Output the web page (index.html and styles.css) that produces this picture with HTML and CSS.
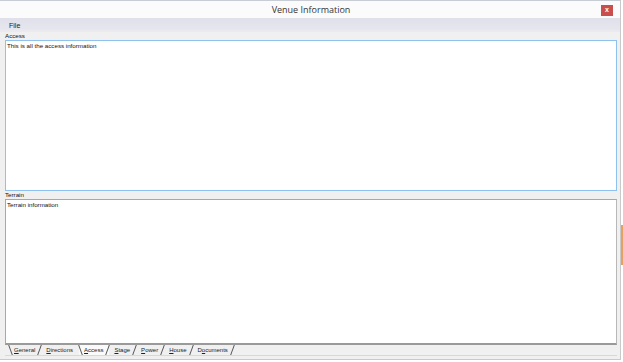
FILE: index.html
```html
<!DOCTYPE html>
<html lang="en">
<head>
    <meta charset="UTF-8">
    <title>Venue Information</title>
    <link rel="stylesheet" href="styles.css">
</head>
<body>
    <div class="window">
        <div class="titlebar">
            <span class="title">Venue Information</span>
            <span class="close">x</span>
        </div>
        <div class="menubar">
            <span class="menu-item">File</span>
        </div>
        <main class="content">
            <div class="label">Access</div>
            <div class="field field-access focused">This is all the access information</div>
            <div class="label">Terrain</div>
            <div class="field field-terrain">Terrain information</div>
            <div class="tabs">
                <span class="tab first"><u>G</u>eneral</span>
                <span class="tab behind"><u>D</u>irections</span>
                <span class="tab active"><u>A</u>ccess</span>
                <span class="tab"><u>S</u>tage</span>
                <span class="tab"><u>P</u>ower</span>
                <span class="tab"><u>H</u>ouse</span>
                <span class="tab">D<u>o</u>cuments</span>
            </div>
        </main>
    </div>
    <div class="desktop">
        <div class="desk-spot"></div>
    </div>
</body>
</html>
```

FILE: styles.css
```css
* {
    box-sizing: border-box;
}

body {
    margin: 0;
    display: flex;
    background-color: #ffffff;
    font-family: "Liberation Sans", Arial, sans-serif;
    color: #111;
}

.window {
    width: 621px;
    height: 360px;
    display: flex;
    flex-direction: column;
    background-color: #f0f0f0;
    border-right: 1px solid #c9c9c9;
    border-bottom: 1px solid #c9c9c9;
}

.titlebar {
    height: 18px;
    flex: none;
    position: relative;
    display: flex;
    justify-content: center;
    align-items: center;
    background-color: #fbfbfb;
    border-top: 1px solid #c7ccd5;
}

.title {
    font-family: "Open Sans", "Noto Sans", sans-serif;
    font-size: 9px;
    color: #333;
    padding-left: 2px;
}

.close {
    position: absolute;
    right: 7px;
    top: 4px;
    width: 12px;
    height: 11px;
    background-color: #c94f4f;
    color: #fff;
    font-size: 7px;
    line-height: 10px;
    text-align: center;
    font-weight: bold;
}

.menubar {
    height: 14px;
    flex: none;
    display: flex;
    align-items: center;
    padding-left: 9px;
    background: linear-gradient(#e0e0eb, #e6e6ee 80%, #ececef);
}

.menu-item {
    font-size: 7px;
    color: #222;
}

.content {
    flex: 1;
    display: flex;
    flex-direction: column;
    padding: 0 3px 0 5px;
}

.label {
    font-size: 6.2px;
    height: 7px;
    line-height: 6px;
    margin-top: 1px;
}

.field {
    background-color: #fff;
    border: 1px solid #a8a8a8;
    font-size: 6.2px;
    line-height: 8px;
    padding: 1px 1px;
}

.field-access {
    height: 151px;
}

.field-terrain {
    height: 146px;
    border-bottom: 2px solid #9a9a9a;
    border-right-color: #b8b8b8;
}

.focused {
    border-color: #8ec1ee;
}

.tabs {
    display: flex;
    height: 11px;
    padding-left: 4px;
    border-bottom: 1px solid #d8d8d8;
}

.tab {
    position: relative;
    font-size: 6px;
    line-height: 10px;
    padding: 0 6px 0 5px;
    color: #222;
}

.tab::after {
    content: "";
    position: absolute;
    right: 1px;
    top: 0;
    height: 10px;
    border-right: 1px solid #555;
    transform: skewX(-20deg);
}

.tab.behind::after {
    display: none;
}

.tab.first::before,
.tab.active::before {
    content: "";
    position: absolute;
    left: 1px;
    top: 0;
    height: 10px;
    border-left: 1px solid #555;
    transform: skewX(20deg);
}

.tab.active {
    background-color: #fafafa;
}

.desktop {
    flex: 1;
    display: flex;
    align-items: flex-start;
}

.desk-spot {
    margin-top: 225px;
    width: 2px;
    height: 40px;
    background-color: #e8a060;
}
```
